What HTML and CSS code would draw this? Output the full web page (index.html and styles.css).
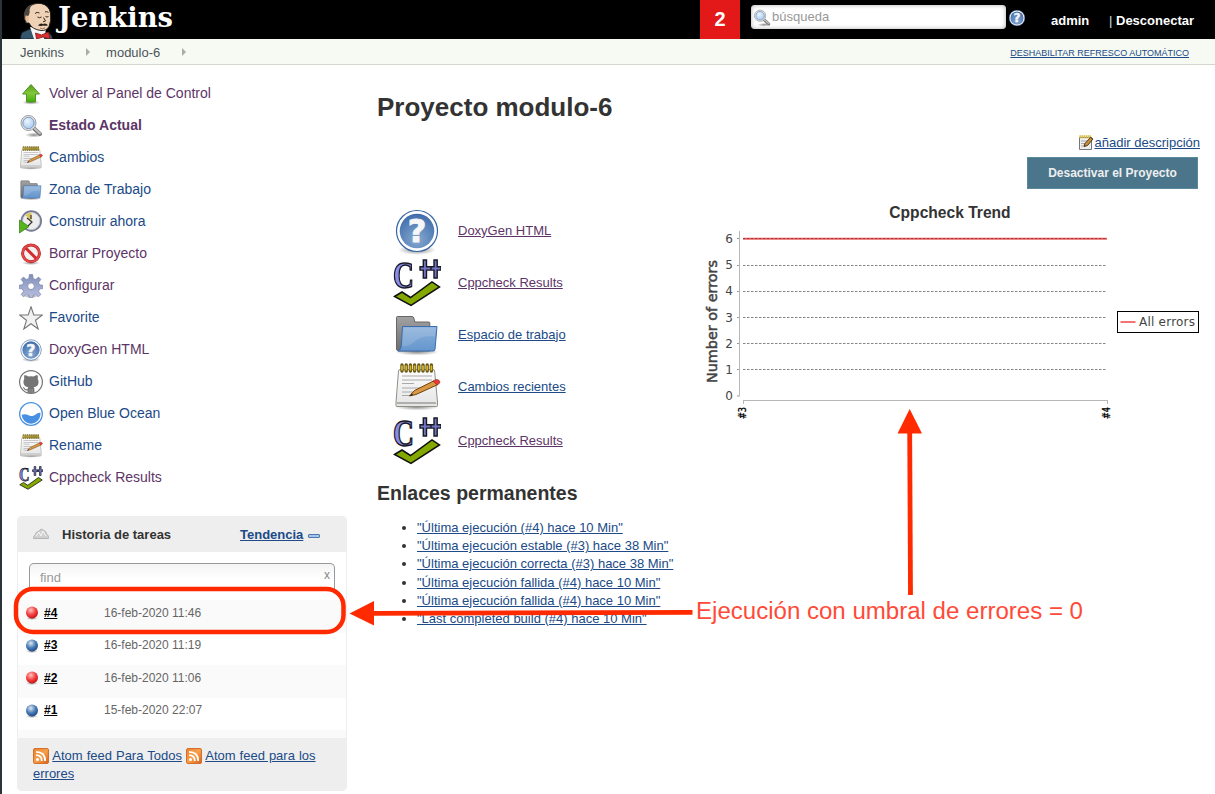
FILE: index.html
```html
<!DOCTYPE html>
<html lang="es">
<head>
<meta charset="utf-8">
<title>modulo-6 [Jenkins]</title>
<link rel="stylesheet" href="styles.css">
</head>
<body>
<svg class="defs" width="0" height="0" aria-hidden="true">
  <defs>
    <radialGradient id="gBlue" cx=".5" cy=".75" r=".75"><stop offset="0" stop-color="#86a9d0"/><stop offset="1" stop-color="#3f6cab"/></radialGradient>
    <linearGradient id="gGreen" x2="0" y2="1"><stop offset="0" stop-color="#4f9a18"/><stop offset=".5" stop-color="#84c83a"/><stop offset="1" stop-color="#3fae08"/></linearGradient>
    <linearGradient id="gFolder" x2="0" y2="1"><stop offset="0" stop-color="#8cb0da"/><stop offset="1" stop-color="#6496cd"/></linearGradient>
    <linearGradient id="gGray" x2="0" y2="1"><stop offset="0" stop-color="#a2a2a2"/><stop offset="1" stop-color="#6c6c6c"/></linearGradient>
    <linearGradient id="gPaper" x2="0" y2="1"><stop offset="0" stop-color="#fdfdfd"/><stop offset="1" stop-color="#e4e4e4"/></linearGradient>
    <linearGradient id="gGear" x2="0" y2="1"><stop offset="0" stop-color="#7f8fba"/><stop offset="1" stop-color="#b9c0df"/></linearGradient>
    <linearGradient id="gRss" x2="1" y2="1"><stop offset="0" stop-color="#e8832e"/><stop offset=".5" stop-color="#f7a04a"/><stop offset="1" stop-color="#d9601c"/></linearGradient>
    <radialGradient id="gLens" cx=".4" cy=".35" r=".7"><stop offset="0" stop-color="#eef5fd"/><stop offset="1" stop-color="#a5c8ee"/></radialGradient>
    <radialGradient id="gRed" cx=".4" cy=".3" r=".65"><stop offset="0" stop-color="#ffc4c4"/><stop offset=".6" stop-color="#f34444"/><stop offset="1" stop-color="#d01818"/></radialGradient>
    <radialGradient id="gBall" cx=".4" cy=".3" r=".65"><stop offset="0" stop-color="#e0e8ee"/><stop offset=".6" stop-color="#4c7eb8"/><stop offset="1" stop-color="#245290"/></radialGradient>
    <radialGradient id="gShade"><stop offset="0" stop-color="#000" stop-opacity=".45"/><stop offset="1" stop-color="#000" stop-opacity="0"/></radialGradient>
  </defs>
  <symbol id="help" viewBox="0 0 48 48">
    <ellipse cx="24" cy="43" rx="19" ry="5" fill="url(#gShade)"/>
    <circle cx="24" cy="24" r="20.500" fill="#fff" stroke="#3465a4" stroke-width="1.200"/>
    <circle cx="24" cy="24" r="17.300" fill="url(#gBlue)"/>
    <text x="24" y="35" text-anchor="middle" class="mark">?</text>
  </symbol>
  <symbol id="cpp" viewBox="0 0 48 48">
    <text x="0" y="29" class="cpp-c" textLength="21" lengthAdjust="spacingAndGlyphs">C</text>
    <path d="M30.300 1h3.200v6.700h4.500v3.400h-4.500V19h-3.200v-7.900H27V7.700h3.300zM41 1h3.200v6.700H48v3.400h-3.800V19H41v-7.900h-3V7.700h3z" fill="#7276c0" stroke="#191926" stroke-width="1.400"/>
    <path d="M1.500 37.500l7.500-4.500 8.500 5.500L39 23l7.500 5L18 46.500z" fill="#83a800" stroke="#111" stroke-width="1.500"/>
  </symbol>
  <symbol id="folder" viewBox="0 0 48 48">
    <ellipse cx="24" cy="41" rx="22" ry="3.500" fill="url(#gShade)"/>
    <path d="M3.500 6.500q0-1 1-1h14.500q1.500 0 1.800 1.500l1 4h14q1 0 1 1V40H6q-2.500 0-2.500-2z" fill="url(#gGray)" stroke="#666"/>
    <path d="M9.500 15.500h34.500l-2 23q-.2 1.500-1.500 1.500H5q3-1 3.200-5z" fill="url(#gFolder)" stroke="#3c6db0"/>
    <path d="M10.500 16.500h32.200l-.7 9Q28 24 21 31q-5 5-12 4z" fill="#fff" opacity=".14"/>
  </symbol>
  <symbol id="note" viewBox="0 0 48 48">
    <ellipse cx="24" cy="44" rx="22" ry="3.500" fill="url(#gShade)"/>
    <path d="M7.500 6.500h32.500q1.500 0 1.600 1.500l2.900 31v3.500q0 1-1 1H4q-1 0-1-1V39l2.500-31q.2-1.500 2-1.500z" fill="url(#gPaper)" stroke="#8f8f86"/>
    <path d="M4 40h39" stroke="#9d9d9d" stroke-width="1.300"/>
    <path d="M9 13h30M9 17h30M9 20.500h12M9 25h20M9 29h14M9 32.500h10" stroke="#aaa" stroke-width="1.200"/>
    <path d="M9 2v6M13.200 2v6M17.400 2v6M21.600 2v6M25.800 2v6M30 2v6M34.200 2v6M38.400 2v6" stroke="#675710" stroke-width="3.400" stroke-linecap="round"/>
    <path d="M9 2.500v5M13.200 2.500v5M17.400 2.500v5M21.600 2.500v5M25.800 2.500v5M30 2.500v5M34.200 2.500v5M38.400 2.500v5" stroke="#d6b72c" stroke-width="1.700"/>
    <path d="M16.500 33l5-5.500 19-9.500 4.500 3.500-22 10z" fill="#d89744" stroke="#70430c"/>
    <path d="M40 18l3-1.400q3-.5 4 2.400 0 1.500-3 2.900z" fill="#ec3b36" stroke="#932c25" stroke-width=".7"/>
    <path d="M16.500 33l2.500-2.500 1 1.500z" fill="#222"/>
  </symbol>
  <symbol id="search" viewBox="0 0 24 24">
    <ellipse cx="15" cy="21" rx="9" ry="2.500" fill="url(#gShade)"/>
    <path d="M15 14.500l6 5.500" stroke="#777" stroke-width="4" stroke-linecap="round"/>
    <path d="M15 14l6 5.500" stroke="#c4c4c4" stroke-width="1.800" stroke-linecap="round"/>
    <circle cx="9.500" cy="9" r="7.500" fill="#eee" stroke="#999"/>
    <circle cx="9.500" cy="9" r="5.700" fill="url(#gLens)" stroke="#7795bf"/>
  </symbol>
  <symbol id="up" viewBox="0 0 24 24">
    <ellipse cx="12" cy="20.500" rx="9" ry="2.200" fill="url(#gShade)"/>
    <path d="M12 2.500l8.500 9.500h-4v8H7.500v-8h-4z" fill="url(#gGreen)" stroke="#51922b"/>
  </symbol>
  <symbol id="clock" viewBox="0 0 24 24">
    <circle cx="12.300" cy="11" r="9.700" fill="#ededec" stroke="#777b91" stroke-width="2"/>
    <circle cx="12.300" cy="11" r="8.500" fill="none" stroke="#c8cad8" stroke-width=".8"/>
    <path d="M12.500 11.500L6.500 5q3-2.500 6-2.500z" fill="#dec558"/>
    <path d="M8 8l5 4-4 4M12 5v4" fill="none" stroke="#333" stroke-width="1.200"/>
    <path d="M.5 10v13l9.500-6.500z" fill="#54b61a" stroke="#327b0f" stroke-width=".7"/>
  </symbol>
  <symbol id="no" viewBox="0 0 24 24">
    <ellipse cx="12" cy="21" rx="9" ry="2" fill="url(#gShade)"/>
    <circle cx="12" cy="11.300" r="8.400" fill="#f4f1f1" stroke="#bb1c20" stroke-width="3"/>
    <path d="M6.200 5.500l11.600 11.600" stroke="#d42a2e" stroke-width="3"/>
    <circle cx="12" cy="11.300" r="8.400" fill="none" stroke="#e24b4d" stroke-width="1.800"/>
  </symbol>
  <symbol id="gear" viewBox="0 0 24 24">
    <ellipse cx="12" cy="22" rx="9" ry="2" fill="url(#gShade)"/>
    <path d="M10.400.5h3.200l.6 4 2.400 1 3-2.400 2.300 2.300-2.400 3 1 2.400 3.400.5v3.200l-3.400.5-1 2.400 2.400 3-2.300 2.300-3-2.400-2.400 1-.6 2.500h-3.200l-.6-2.500-2.400-1-3 2.400-2.300-2.300 2.400-3-1-2.400L.1 14.500v-3.200l3.400-.5 1-2.400-2.400-3 2.300-2.300 3 2.400 2.400-1z" fill="url(#gGear)" stroke="#7a84ad" stroke-width=".7"/>
    <circle cx="12" cy="12.200" r="3.400" fill="#fff" stroke="#8790b5"/>
  </symbol>
  <symbol id="star" viewBox="0 0 24 24">
    <path d="M12 .8l2.800 8.200H23.500l-7 5.300 2.700 8.700-7.200-5.300L4.800 23l2.700-8.700L.5 9h8.700z" fill="#f2f2f2" stroke="#777" stroke-width="1.100"/>
  </symbol>
  <symbol id="github" viewBox="0 0 24 24">
    <circle cx="12" cy="12" r="11.400" fill="#fff" stroke="#757575" stroke-width="1.200"/>
    <path d="M5.500 5q2 0 4 1.500 2.500-.6 5 0Q16.500 5 18.500 5q.8 2 .2 4 1.200 1.600.8 4-.6 3.700-4.800 4.300.7.900.7 2V23H8.600v-2.600q-3 .6-4-2-.4-1-1.300-1.400 1.600-.4 2.600 1.400.9 1.200 2.700.7 0-1.100.8-1.800-4.200-.6-4.900-4.300-.4-2.400.8-4-.6-2 .2-4z" fill="#757575"/>
    <path d="M11 19v4M13.200 19v4" stroke="#aaa" stroke-width=".5"/>
  </symbol>
  <symbol id="ocean" viewBox="0 0 24 24">
    <circle cx="12" cy="12" r="11.300" fill="#fff" stroke="#4a90e2" stroke-width="1.300"/>
    <path d="M2.600 12.800q3.500-1.200 7 .4 4.500 2 7-.6 2-2.300 4.900-1.800Q21.700 17.800 16 20.700q-6 2.500-10.500-1.700-2.700-2.700-2.900-6.200z" fill="#4a90e2"/>
  </symbol>
  <symbol id="edit" viewBox="0 0 16 16">
    <path d="M1.500 2.500h12v12h-12z" fill="#eee" stroke="#777"/>
    <path d="M3 6h8M3 8.500h6M3 11h5" stroke="#aaa"/>
    <path d="M1.500 1.800h12" stroke="#d5b83a" stroke-width="3" stroke-dasharray="1.400 .6"/>
    <path d="M6 11.500l1-3 5.500-6 2.500 1.500-5.500 6.500z" fill="#c99038" stroke="#4a3517"/>
  </symbol>
  <symbol id="rss" viewBox="0 0 16 16">
    <rect x=".5" y=".5" width="15" height="15" rx="1.500" fill="url(#gRss)" stroke="#d3702f"/>
    <circle cx="4.500" cy="11.500" r="1.500" fill="#fff"/>
    <path d="M3 7.200q5.800 0 5.800 5.800M3 3.800q9.200 0 9.200 9.200" fill="none" stroke="#fff" stroke-width="1.800"/>
  </symbol>
  <symbol id="red" viewBox="0 0 14 14"><ellipse cx="7" cy="12.300" rx="6" ry="1.700" fill="url(#gShade)"/><circle cx="7" cy="6.600" r="6" fill="url(#gRed)"/></symbol>
  <symbol id="blue" viewBox="0 0 14 14"><ellipse cx="7" cy="12.300" rx="6" ry="1.700" fill="url(#gShade)"/><circle cx="7" cy="6.600" r="6" fill="url(#gBall)"/></symbol>
</svg>

<header class="header">
  <a class="logo">
    <svg width="160" height="39" viewBox="0 0 160 39">
      <path d="M1.500 39q0-4 1.500-6.500l8-3.500 16 3q6 1 6.500 7z" fill="#34566a" stroke="#152028" stroke-width=".8"/>
      <path d="M11 27l4 12h10l2-10z" fill="#f5f5f5"/>
      <path d="M7 23Q3 14 9 8q5-5.500 13-4.500 8 1.500 9.500 9.500 1 8-1.500 13.500-2.500 4.500-8 4-9-1-12-7.500z" fill="#efd2b5" stroke="#1c1714" stroke-width=".9"/>
      <path d="M7 22Q3.500 17 5.500 11.500q2-6 8-7.500-2.500 3-3 6 1 2-.8 5.500-2 1-1 5z" fill="#4b443d"/>
      <path d="M6.500 15.500q3-.5 3.300 2l-.3 4q-2.800.5-3.300-2.500z" fill="#e7bd98"/>
      <path d="M16 13.500q2-2 4.500-.5M26 12q2-1 3.500.5M18.500 17q2 1.500 4 0M26.500 16.500q1.500 1 3 0M24.500 17.500l2 3.500-2.500.8" fill="none" stroke="#382a22" stroke-width="1"/>
      <path d="M19 25.500q2.500-3 5-1.500 3-1.200 5 1.200-2.500 1-5 .2-2.500 1-5 .1z" fill="#2b211d"/>
      <path d="M21 28q2.500 1.500 5 0" fill="none" stroke="#94594c" stroke-width=".8"/>
      <path d="M16.500 33l6 2 7-3 1.500 7-7-2-6.500 2z" fill="#dd3030" stroke="#7d1619" stroke-width=".8"/>
      <text x="39" y="27" class="logo-text" textLength="115" lengthAdjust="spacingAndGlyphs">Jenkins</text>
    </svg>
  </a>
  <span class="alerts">2</span>
  <div class="searchbox"><svg width="18" height="18"><use href="#search"/></svg><span>búsqueda</span></div>
  <svg class="search-help" width="16" height="16" viewBox="3 3 42 42"><use href="#help" width="48" height="48"/></svg>
  <a class="user">admin</a>
  <span class="logout">| <b>Desconectar</b></span>
</header>
<nav class="crumbs">
  <a>Jenkins</a><i class="chev"></i><a>modulo-6</a><i class="chev"></i>
  <a class="refresh">DESHABILITAR REFRESCO AUTOMÁTICO</a>
</nav>
<div class="page">
  <aside class="side">
    <ul class="tasks">
      <li class="seen"><svg><use href="#up"/></svg>Volver al Panel de Control</li>
      <li class="seen current"><svg><use href="#search"/></svg>Estado Actual</li>
      <li><svg><use href="#note"/></svg>Cambios</li>
      <li><svg><use href="#folder"/></svg>Zona de Trabajo</li>
      <li><svg><use href="#clock"/></svg>Construir ahora</li>
      <li class="seen"><svg><use href="#no"/></svg>Borrar Proyecto</li>
      <li class="seen"><svg><use href="#gear"/></svg>Configurar</li>
      <li><svg><use href="#star"/></svg>Favorite</li>
      <li class="seen"><svg><use href="#help"/></svg>DoxyGen HTML</li>
      <li><svg><use href="#github"/></svg>GitHub</li>
      <li><svg><use href="#ocean"/></svg>Open Blue Ocean</li>
      <li><svg><use href="#note"/></svg>Rename</li>
      <li class="seen"><svg><use href="#cpp"/></svg>Cppcheck Results</li>
    </ul>
    <section class="history">
      <div class="history-head">
        <svg width="16" height="12" viewBox="0 0 16 12"><path d="M.5 10.500Q0 8 2.500 6.500q0-2.500 3-3Q8-.5 11 2.500q2.500 1 2.500 3.500 2.500 1.500 2 4.500z" fill="#d0d0d0" stroke="#b4b4b4"/><path d="M3 8l3-4 2 4 2-5 3 5" fill="none" stroke="#f6f6f6"/></svg>
        <b>Historia de tareas</b>
        <a>Tendencia</a><i class="minus"></i>
      </div>
      <div class="find"><span>find</span><span class="clear">x</span></div>
      <div class="build odd"><svg><use href="#red"/></svg><a>#4</a><span>16-feb-2020 11:46</span></div>
      <div class="build"><svg><use href="#blue"/></svg><a>#3</a><span>16-feb-2020 11:19</span></div>
      <div class="build odd"><svg><use href="#red"/></svg><a>#2</a><span>16-feb-2020 11:06</span></div>
      <div class="build"><svg><use href="#blue"/></svg><a>#1</a><span>15-feb-2020 22:07</span></div>
      <div class="spacer"></div>
      <div class="feeds"><svg><use href="#rss"/></svg> <a>Atom feed Para Todos</a> <svg><use href="#rss"/></svg> <a>Atom feed para los errores</a></div>
    </section>
  </aside>
  <main class="main">
    <h1>Proyecto modulo-6</h1>
    <div class="actions">
      <div class="describe"><svg width="16" height="16"><use href="#edit"/></svg><a>añadir descripción</a></div>
      <button class="disable">Desactivar el Proyecto</button>
    </div>
    <div class="overview">
      <ul class="links">
        <li class="seen"><svg><use href="#help"/></svg><a>DoxyGen HTML</a></li>
        <li class="seen"><svg class="soft"><use href="#cpp"/></svg><a>Cppcheck Results</a></li>
        <li><svg><use href="#folder"/></svg><a>Espacio de trabajo</a></li>
        <li><svg><use href="#note"/></svg><a>Cambios recientes</a></li>
        <li class="seen last"><svg><use href="#cpp"/></svg><a>Cppcheck Results</a></li>
      </ul>
      <section class="trend">
        <h3>Cppcheck Trend</h3>
        <svg class="chart" width="500" height="200" viewBox="700 225 500 200">
          <path d="M739.500 231v165.500M743 400.500h365M743.500 401v3M1107.500 401v3" stroke="#b8b8b8" fill="none"/>
          <path d="M737 238.500h2M737 265.500h2M737 291.500h2M737 317.500h2M737 343.500h2M737 369.500h2M737 396h2" stroke="#999"/>
          <path d="M743 265.500h363M743 291.500h363M743 317.500h363M743 343.500h363M743 369.500h363" stroke="#868686" stroke-dasharray="2.500 1.500"/>
          <path d="M743 238.800h364" stroke="#ee6262" stroke-width="2"/>
          <path d="M743 238.500h364" stroke="#a93636" stroke-dasharray="2.500 1.500"/>
          <g class="tick"><text x="733" y="243">6</text><text x="733" y="269">5</text><text x="733" y="295">4</text><text x="733" y="322">3</text><text x="733" y="348">2</text><text x="733" y="374">1</text><text x="733" y="400">0</text></g>
          <text class="axis" transform="translate(717 383) rotate(-90)" textLength="123" lengthAdjust="spacingAndGlyphs">Number of errors</text>
          <text class="run" transform="translate(746 419) rotate(-90)" textLength="12" lengthAdjust="spacingAndGlyphs">#3</text>
          <text class="run" transform="translate(1110 419) rotate(-90)" textLength="12" lengthAdjust="spacingAndGlyphs">#4</text>
          <rect x="1117.500" y="311.500" width="81" height="21" fill="#fff" stroke="#000"/>
          <path d="M1120.500 322h15" stroke="#f47474" stroke-width="2"/>
          <text class="legend" x="1139" y="326" textLength="56">All errors</text>
        </svg>
      </section>
    </div>
    <h2>Enlaces permanentes</h2>
    <ul class="permalinks">
      <li><a>"Última ejecución (#4) hace 10 Min"</a></li>
      <li><a>"Última ejecución estable (#3) hace 38 Min"</a></li>
      <li><a>"Última ejecución correcta (#3) hace 38 Min"</a></li>
      <li><a>"Última ejecución fallida (#4) hace 10 Min"</a></li>
      <li><a>"Última ejecución fallida (#4) hace 10 Min"</a></li>
      <li><a>"Last completed build (#4) hace 10 Min"</a></li>
    </ul>
  </main>
</div>
<svg class="annotations" width="1215" height="794" viewBox="0 0 1215 794">
  <rect x="16" y="589" width="327.500" height="43" rx="17" fill="none" stroke="#ff2a00" stroke-width="4.500"/>
  <path d="M692.500 612.300L374 613.300" stroke="#ff2a00" stroke-width="4.800"/>
  <path d="M349.500 613.500l24.500-12.500v24.500z" fill="#ff2a00"/>
  <path d="M910.500 595L909.700 433" stroke="#ff2a00" stroke-width="4.800"/>
  <path d="M909.700 409l-12.200 24.500h24.500z" fill="#ff2a00"/>
  <text x="696" y="618.500" class="note-text" textLength="387" lengthAdjust="spacingAndGlyphs">Ejecución con umbral de errores = 0</text>
</svg>
</body>
</html>
```
FILE: styles.css
```css
* { box-sizing: border-box; }
body {
  margin: 0;
  height: 794px;
  overflow: hidden;
  position: relative;
  border-left: 2px solid #29343b;
  background: #fff;
  color: #333;
  font: 13px/18.200px "Liberation Sans", Arial, sans-serif;
}
ul { list-style: none; margin: 0; padding: 0; }
a { color: #204a87; }
.defs { position: absolute; }
.mark { font: bold 32px "DejaVu Sans", sans-serif; fill: #f4f6f8; stroke: #f4f6f8; stroke-width: 1px; }
.cpp-c { font: bold 38px "Liberation Serif", serif; fill: #8a8de8; stroke: #191926; stroke-width: 1.500px; }

.header { display: flex; height: 39px; background: #000; color: #fff; }
.logo { width: 698px; padding-left: 17px; }
.logo svg { display: block; }
.logo-text { font: bold 28px "DejaVu Serif", serif; fill: #fff; }
.alerts { width: 40px; background: #e31818; font: bold 20px/39px "Liberation Sans", sans-serif; text-align: center; }
.searchbox {
  display: flex; align-items: center; gap: 1px;
  width: 255px; height: 24px; margin: 5px 0 0 11px; padding: 1px 0 0 2px;
  border-radius: 4px; background: #fff; box-shadow: inset 0 0 4px #aaa; color: #999;
}
.search-help { margin: 10px 0 0 3px; }
.user { margin: 12px 0 0 26px; color: #fff; font-weight: bold; width: 58px; }
.logout { margin-top: 12px; color: #cfe2ee; white-space: nowrap; }
.logout b { color: #fff; }

.crumbs {
  display: flex; align-items: center; height: 26px; padding: 3px 26px 0 18px;
  background: #f6faf2; border-bottom: 1px solid #d3d7cf;
}
.crumbs a { color: #4d545d; }
.chev { margin: 0 16px 3px 22px; border: 4px solid transparent; border-left: 4px solid #aaa; border-right: 0; }
.crumbs .refresh { margin-left: auto; color: #204a87; font-size: 9px; text-decoration: underline; }

.page { display: flex; }
.side { width: 345px; padding: 12px 0 0 15px; flex: none; }
.tasks li { display: flex; align-items: center; gap: 6px; height: 32px; padding-left: 2px; color: #204a87; font-size: 14px; }
.tasks svg { width: 24px; height: 24px; margin-top: 2px; }
.tasks .seen, .seen a { color: #5c3566; }
.tasks .current { font-weight: bold; }

.history { width: 330px; height: 275px; margin-top: 23px; border: 1px solid #eee; border-radius: 4px; overflow: hidden; }
.history-head { display: flex; align-items: center; height: 35px; padding: 2px 0 0 15px; background: #eee; }
.history-head svg { margin-bottom: 4px; }
.history-head b { margin-left: 13px; width: 178px; }
.history-head a { font-weight: bold; text-decoration: underline; }
.minus { width: 12px; height: 4px; margin-left: 5px; border: 1px solid #4c78b0; border-radius: 1px; background: #a9c5e6; }
.find {
  display: flex; justify-content: space-between;
  height: 26px; margin: 11px 11px; padding: 5px 4px 0 10px;
  border: 1.500px solid #999; border-bottom: 0; border-radius: 5px 5px 0 0;
  background: linear-gradient(#f4f4f4, #fff 60%); color: #999;
}
.clear { margin-top: -3px; font-size: 12px; color: #888; }
.build { display: flex; align-items: center; height: 32.500px; padding: 0 0 7px 7px; font-size: 12px; color: #666; }
.odd, .spacer { background: #fafafa; }
.build svg { width: 14px; height: 14px; margin-top: 1px; }
.build a { width: 60px; margin-left: 5px; color: #000; font-weight: bold; text-decoration: underline; }
.spacer { height: 8px; }
.feeds { height: 54px; padding: 9px 20px 0 15px; background: #eee; word-spacing: .4px; }
.feeds a { text-decoration: underline; }
.feeds svg { width: 16px; height: 16px; vertical-align: -4px; }

.main { flex: 1; padding: 26px 15px 0 30px; }
h1, h2, h3 { margin: 0; }
h1 { font-size: 26px; line-height: 32px; }
.actions { display: flex; flex-direction: column; align-items: flex-end; margin-top: 11px; }
.describe { display: flex; align-items: center; height: 18px; margin-bottom: 5px; }
.describe a, .links a, .permalinks a { text-decoration: underline; }
.disable {
  width: 171px; height: 32px; margin-right: 2px; padding: 0;
  border: 1px solid #5a889d; background: #4b758b; color: #eee;
  font: bold 12px "Liberation Sans", sans-serif;
}
.overview { display: flex; height: 278px; }
.links { width: 323px; padding: 16px 0 0 16px; }
.links li { display: flex; align-items: center; gap: 17px; height: 52px; }
.links .last { height: 56px; }
.links li svg { width: 48px; height: 48px; }
.soft { filter: blur(.6px); }
.trend { width: 500px; padding-top: 14px; }
h3 { font-size: 15.600px; line-height: 20px; text-align: center; }
.chart { display: block; margin-top: 2px; }
.chart text { font-family: "DejaVu Sans", sans-serif; fill: #444; }
.chart .tick text { font-size: 12px; text-anchor: end; }
.chart .axis { font-size: 14px; stroke: #444; stroke-width: .5px; }
.chart .run { font-size: 10px; fill: #000; stroke: #000; stroke-width: .3px; }
.chart .legend { font-size: 12px; }
h2 { margin-top: 13px; font-size: 19.500px; line-height: 26px; }
.permalinks { list-style: disc; margin-top: 13px; padding-left: 40px; }

.annotations { position: absolute; left: -2px; top: 0; pointer-events: none; }
.note-text { font: 23.500px "Liberation Sans", sans-serif; fill: #ff4a38; }
```
